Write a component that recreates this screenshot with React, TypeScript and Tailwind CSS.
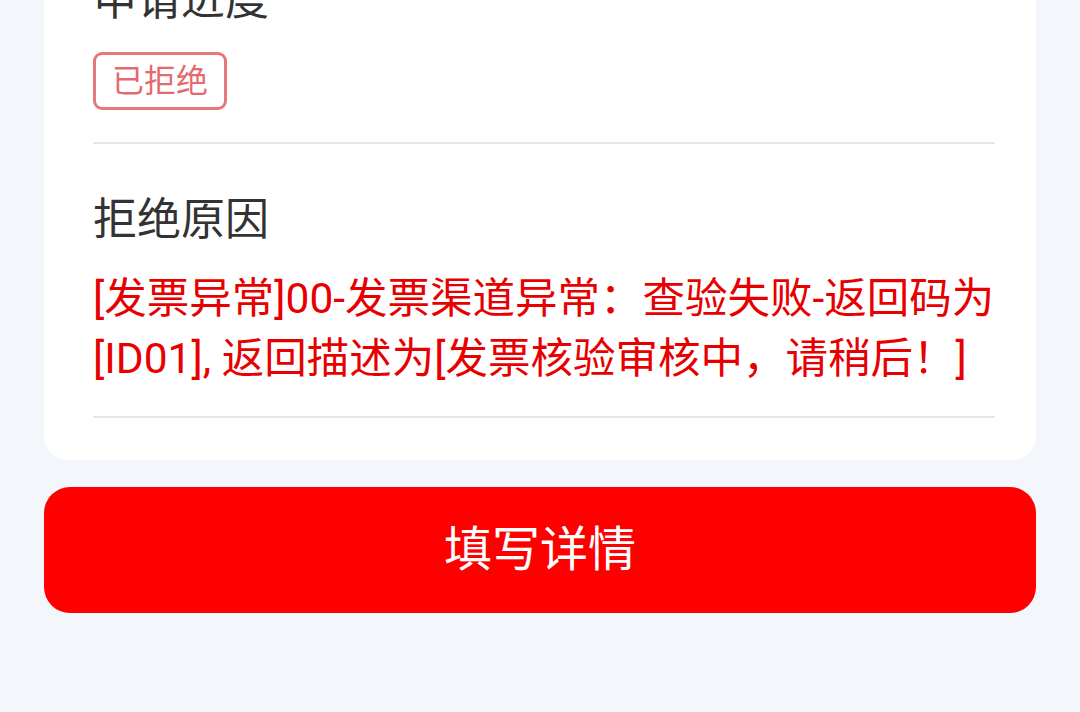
import React from 'react';

const font = { fontFamily: 'Roboto, "Noto Sans CJK SC", "Noto Sans", sans-serif' };

export default function App() {
  return (
    <div className="min-h-screen w-full bg-[#f3f6fa] px-[44px] overflow-hidden" style={font}>
      {/* Card */}
      <div className="-mt-[30px] bg-white rounded-b-[24px] pl-[49px] pr-[41px] pb-[42px]">
        {/* Progress */}
        <div className="pb-[32px] border-b-2 border-[#e6e6e6]">
          <p className="text-[44px] leading-[60px] text-[#333333]">申请进度</p>
          <span className="mt-[22px] inline-flex items-center h-[58px] px-[16px] border-[3px] border-[#e5777d] rounded-[9px] text-[32px] text-[#e46a71]">
            已拒绝
          </span>
        </div>

        {/* Reason */}
        <div className="pt-[46px] pb-[27px] border-b-2 border-[#e6e6e6]">
          <p className="text-[44px] leading-[60px] text-[#333333]">拒绝原因</p>
          <p className="mt-[19px] text-[42.5px] leading-[60px] text-[#e80000]">
            [发票异常]00-发票渠道异常：查验失败-返回码为[ID01], 返回描述为[发票核验审核中，请稍后！]
          </p>
        </div>
      </div>

      {/* Action */}
      <button className="mt-[27px] w-full h-[126px] rounded-[26px] bg-[#ff0000] text-white text-[48px] flex items-center justify-center">
        填写详情
      </button>
    </div>
  );
}
